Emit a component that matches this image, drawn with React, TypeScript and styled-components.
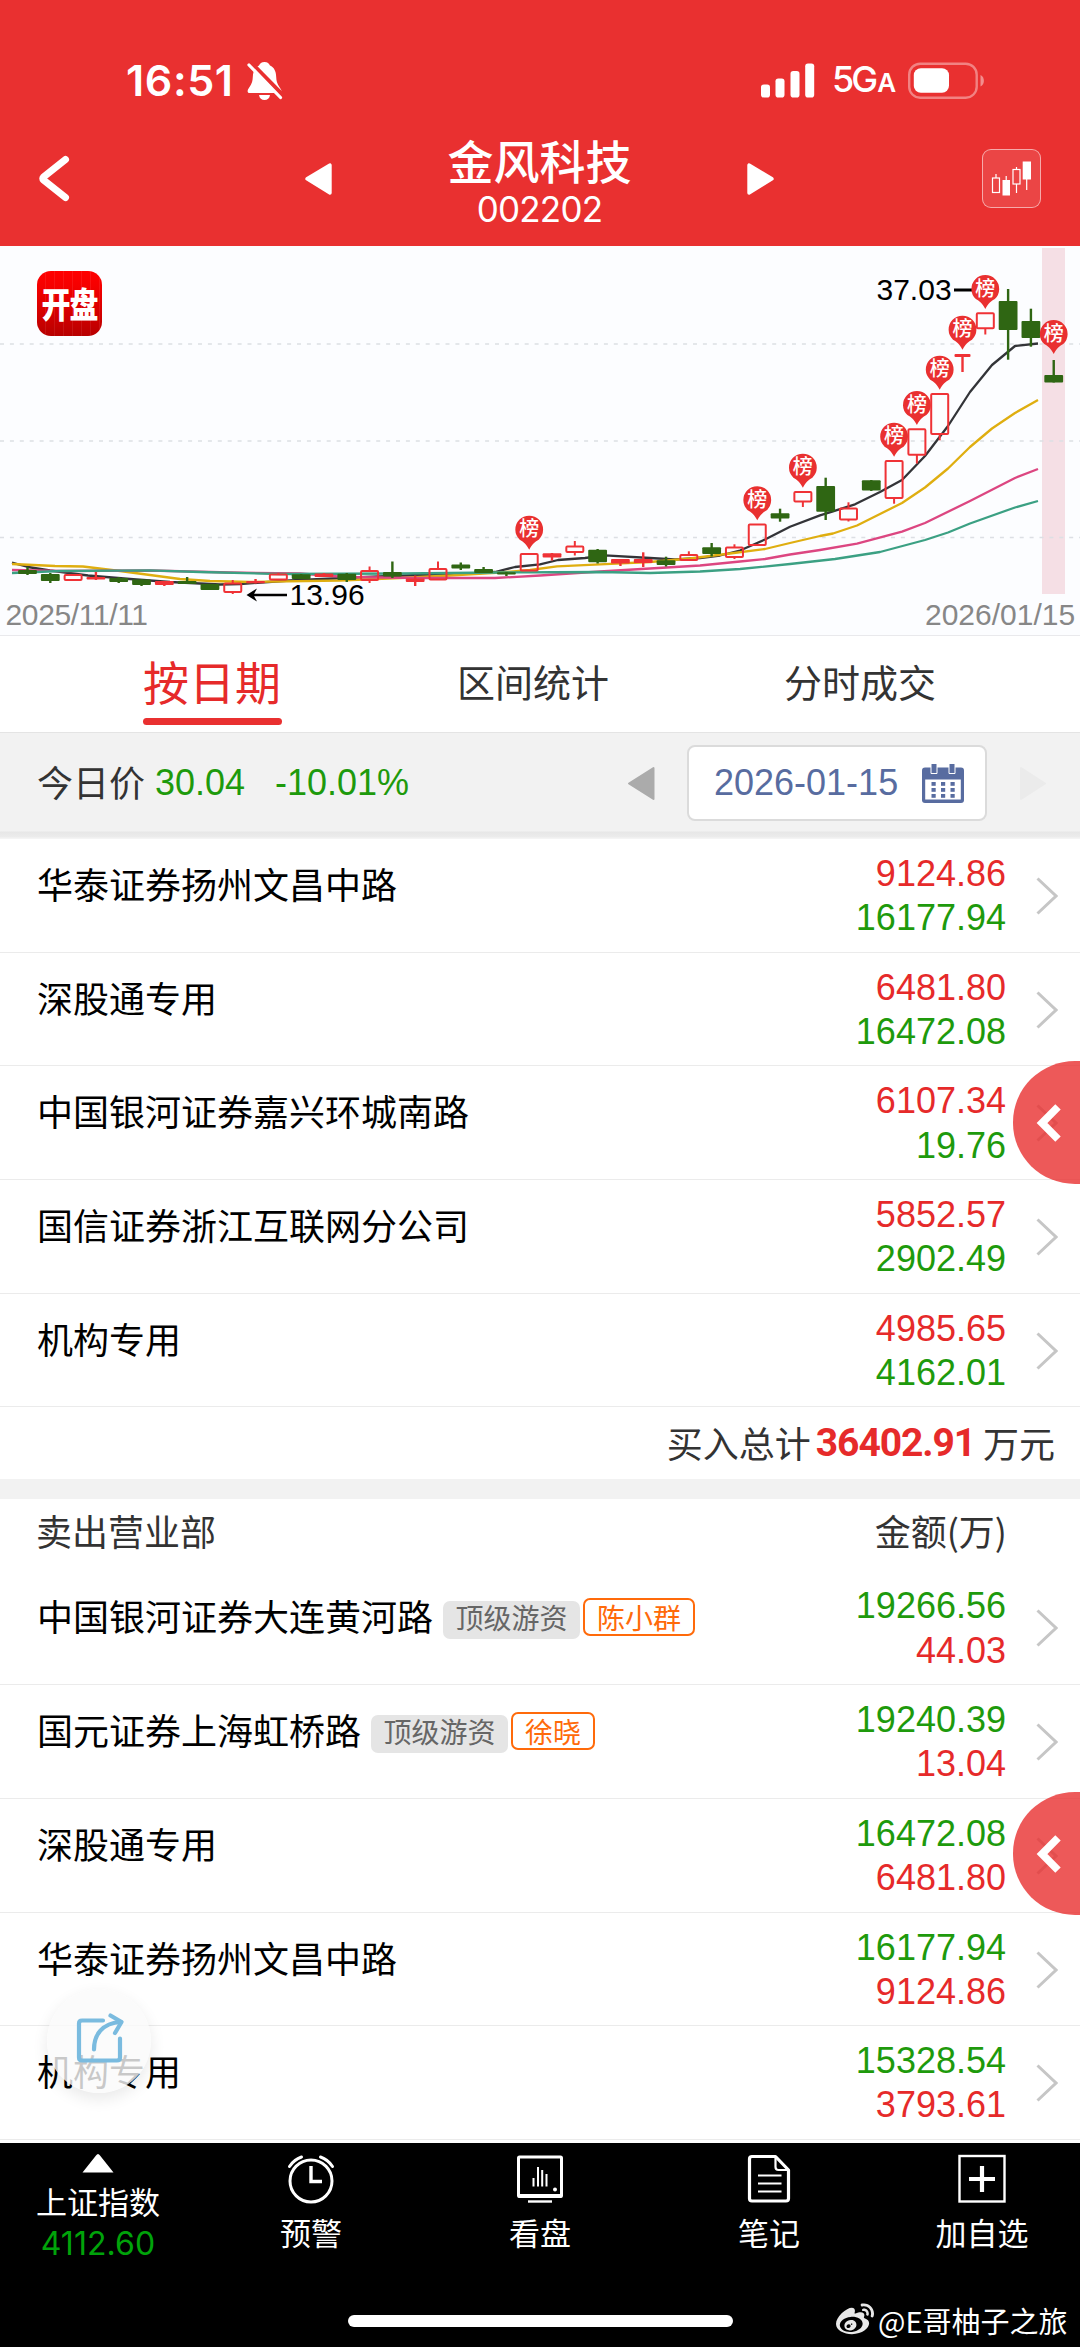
import React from 'react';
import styled, { createGlobalStyle } from 'styled-components';
import { FaWeibo } from 'react-icons/fa';

const GlobalStyle = createGlobalStyle`
  * { box-sizing: border-box; }
  body {
    margin: 0;
    background: #fff;
    font-family: "Liberation Sans", "Noto Sans CJK SC", sans-serif;
  }
`;

const RED = '#e93030';
const UP = '#e62a2a';
const DOWN = '#1e9a0c';

const Page = styled.div`
  position: relative;
  width: 1080px;
  height: 2347px;
  overflow: hidden;
  display: flex;
  flex-direction: column;
  background: #fff;
  color: #000;
`;

const Header = styled.header`
  height: 246px;
  flex: none;
  background: ${RED};
  color: #fff;
  display: flex;
  flex-direction: column;
`;

const StatusBar = styled.div`
  height: 122px;
  padding: 40px 95px 0 126px;
  display: flex;
  justify-content: space-between;
  align-items: center;
  svg { display: block; }
`;

const StatusGroup = styled.div`
  display: flex;
  align-items: center;
`;

const Clock = styled.span`
  font: 600 43px/50px Inter, sans-serif;
  width: 121px;
  letter-spacing: 0.6px;
  margin-top: -2px;
  white-space: nowrap;
`;

const Network = styled.span`
  font: 500 36px/44px Inter, sans-serif;
  width: 76px;
  letter-spacing: -3px;
  margin-left: 17px;
  white-space: nowrap;
  small { font-size: 26px; font-weight: 600; margin-left: 2px; }
`;

const NavBar = styled.div`
  height: 124px;
  display: grid;
  grid-template-columns: 305px 27px 1fr 27px 208px 59px 39px;
  align-items: start;
  svg { display: block; }
`;

const NavSlot = styled.div<{ $top: number; $left?: number }>`
  padding-top: ${p => p.$top}px;
  padding-left: ${p => p.$left ?? 0}px;
`;

const Title = styled.div`
  text-align: center;
  padding-top: 9px;
  h1 {
    margin: 0;
    font: 500 46px/56px "Noto Sans CJK SC", sans-serif;
  }
  p {
    margin: 5px 0 0;
    font: 400 35px/34px Inter, sans-serif;
    letter-spacing: -0.8px;
  }
`;

const ChartButton = styled.div`
  margin-top: 27px;
  width: 59px;
  height: 59px;
  border-radius: 9px;
  border: 1px solid rgba(255, 255, 255, 0.55);
  background: rgba(255, 255, 255, 0.1);
`;

const ChartPanel = styled.section`
  position: relative;
  height: 390px;
  flex: none;
  background: #fcfdff;
  border-bottom: 1px solid #e9e9ec;
  > svg { display: block; }
`;

const AppBadge = styled.div`
  position: absolute;
  left: 37px;
  top: 25px;
  width: 65px;
  height: 65px;
  border-radius: 14px;
  background:
    repeating-linear-gradient(90deg, transparent 0 8px, rgba(255, 255, 255, 0.08) 8px 9px),
    linear-gradient(#ff0000 0%, #f40000 25%, #b80000 100%);
  color: #fff;
  font: 900 29px/62px "Noto Sans CJK SC", sans-serif;
  text-align: center;
  letter-spacing: -1px;
  span {
    display: block;
    transform: scaleY(1.22);
  }
`;

const Tabs = styled.nav`
  height: 97px;
  flex: none;
  display: grid;
  grid-template-columns: 373px 320px 334px;
  border-bottom: 1px solid #e4e4e4;
  justify-items: center;
`;

const Tab = styled.div<{ $active?: boolean }>`
  display: flex;
  flex-direction: column;
  color: ${p => (p.$active ? UP : '#333')};
  font: 400 ${p => (p.$active ? 46 : 38)}px/60px "Noto Sans CJK SC", sans-serif;
  padding: ${p => (p.$active ? '14px 0 0 52px' : '15px 0 0')};
  i {
    height: 7px;
    margin-top: 8px;
    width: 139px;
    border-radius: 4px;
    background: ${RED};
  }
`;

const PriceBar = styled.div`
  height: 106px;
  flex: none;
  background: linear-gradient(#f2f2f2 98px, #e7e7e7 99px, #ececec 104px, #f4f4f4 105px);
  display: flex;
  align-items: flex-start;
  padding: 12px 33px 0 37px;
  font-size: 36px;
  line-height: 76px;
`;

const PriceLabel = styled.span`
  font-family: "Noto Sans CJK SC", sans-serif;
  color: #333;
  line-height: 72px;
  width: 118px;
`;

const Price = styled.span<{ $width: number }>`
  color: ${DOWN};
  width: ${p => p.$width}px;
`;

const Arrow = styled.svg<{ $gap: string }>`
  margin: ${p => p.$gap};
  flex: none;
`;

const DateBox = styled.div`
  width: 300px;
  height: 76px;
  border: 2px solid #dbdbdb;
  border-radius: 8px;
  background: #fff;
  color: #586ca0;
  padding: 0 21px 0 25px;
  display: flex;
  justify-content: space-between;
  align-items: center;
  line-height: 72px;
`;

const List = styled.ul`
  margin: 0;
  padding: 0;
  list-style: none;
  flex: none;
`;

const Row = styled.li`
  height: 113.7px;
  border-bottom: 1px solid #ebebeb;
  padding: 12px 22px 0 37px;
  display: flex;
  align-items: flex-start;
`;

const Name = styled.div`
  flex: 1;
  display: flex;
  font: 400 36px/64px "Noto Sans CJK SC", sans-serif;
`;

const Tag = styled.span<{ $hot?: boolean }>`
  height: 38px;
  margin: ${p => (p.$hot ? '15px 0 0 3px' : '18px 0 0 10px')};
  padding: 0 ${p => (p.$hot ? 12 : 10.5)}px;
  border-radius: 7px;
  border: 2px solid ${p => (p.$hot ? '#ff6a0a' : '#e5e5e5')};
  background: ${p => (p.$hot ? '#fff' : '#e5e5e5')};
  color: ${p => (p.$hot ? '#ff6a0a' : '#666')};
  font-size: 28px;
  line-height: ${p => (p.$hot ? 34 : 29)}px;
`;

const Amounts = styled.div`
  text-align: right;
  font-size: 36px;
  line-height: 44.3px;
  margin: 1px 30px 0 0;
`;

const Amount = styled.div<{ $up: boolean }>`
  color: ${p => (p.$up ? UP : DOWN)};
`;

const Total = styled.div`
  height: 72px;
  flex: none;
  display: flex;
  justify-content: flex-end;
  padding-right: 25px;
  color: #333;
  font: 400 36px/70px "Noto Sans CJK SC", sans-serif;
  b {
    color: ${UP};
    font: 700 39px/73px Roboto, sans-serif;
    letter-spacing: -1.1px;
    margin: 0 8px 0 5px;
  }
`;

const Divider = styled.div`
  height: 20px;
  flex: none;
  background: #f2f2f2;
`;

const ListHeader = styled.div`
  height: 72px;
  flex: none;
  display: flex;
  justify-content: space-between;
  padding: 0 73px 0 36px;
  color: #333;
  font: 400 36px/63px "Noto Sans CJK SC", sans-serif;
`;

const Footer = styled.footer`
  position: absolute;
  left: 0;
  right: 0;
  top: 2143px;
  height: 204px;
  background: #000;
  color: #fff;
  display: grid;
  grid-template-columns: 196px 230px 228px 230px 196px;
  align-items: start;
`;

const FooterItem = styled.div`
  display: flex;
  flex-direction: column;
  align-items: center;
  padding-top: 11px;
  font: 400 31px/40px "Noto Sans CJK SC", sans-serif;
  svg { display: block; margin-bottom: 8px; }
`;

const IndexItem = styled(FooterItem)`
  em {
    font: 400 32px/45px Inter, sans-serif;
    color: #00a30a;
    letter-spacing: 0.1px;
  }
`;

const HomeBar = styled.div`
  position: absolute;
  left: 348px;
  top: 172px;
  width: 385px;
  height: 12px;
  border-radius: 6px;
  background: #fff;
`;

const Watermark = styled.div`
  position: absolute;
  left: 836px;
  top: 155px;
  display: flex;
  align-items: center;
  gap: 4px;
  font: 400 29px/44px "Noto Sans CJK SC", sans-serif;
  color: #fff;
  white-space: nowrap;
  svg { color: #e8e8e8; }
`;

const SideHandle = styled.div<{ $top: number }>`
  position: absolute;
  top: ${p => p.$top}px;
  right: 0;
  width: 67px;
  height: 123px;
  border-radius: 62px 0 0 62px / 61px 0 0 61px;
  background: rgba(233, 48, 48, 0.8);
  display: flex;
  align-items: center;
  padding-left: 23px;
`;

const ShareButton = styled.div`
  position: absolute;
  left: 47px;
  top: 1989px;
  width: 104px;
  height: 104px;
  border-radius: 50%;
  background: rgba(250, 250, 250, 0.8);
  box-shadow: 0 6px 16px rgba(0, 0, 0, 0.09);
  padding: 22px 0 0 28px;
`;

type Kind = 'g' | 'r' | 'h';
// kind (g falling, r thin rising, h hollow rising), body top, body bottom, high, low, listed
type Candle = [Kind, number, number, number, number, boolean?];

const candles: Candle[] = [
  ['g', 570, 574, 567, 575], ['g', 574, 581, 573, 583], ['h', 575, 580, 575, 580],
  ['r', 577, 579.5, 572, 580], ['g', 578, 582, 577, 583], ['g', 579.5, 585, 579, 586],
  ['r', 581, 585, 581, 586], ['g', 581, 584, 577, 584], ['g', 584, 590, 584, 590],
  ['h', 583.5, 592, 580, 594], ['r', 581, 583.3, 579, 583.5], ['h', 574.5, 579.5, 573, 580],
  ['g', 574.3, 579, 574, 579], ['r', 573.5, 577, 573, 577], ['g', 573.7, 580, 573, 582],
  ['h', 571, 580, 566.5, 583], ['g', 572, 576.5, 561.5, 578], ['r', 578.5, 582, 575.5, 586],
  ['h', 569, 579.5, 561.5, 580], ['g', 564.5, 568.5, 562.5, 570], ['g', 569, 573, 567, 573],
  ['g', 572.2, 574.5, 572, 576], ['h', 554, 570.5, 554, 571, true], ['r', 553.2, 557.5, 553, 560.5],
  ['h', 546.5, 552, 541, 555.5], ['g', 549.7, 562.3, 549, 563.5], ['r', 559, 563.5, 559, 566],
  ['r', 559, 563, 552.3, 567], ['g', 560.3, 565, 556.7, 566.5], ['h', 555, 560, 551.3, 560],
  ['g', 547.3, 554, 543, 556.5], ['h', 547.5, 557, 544.3, 559], ['h', 524.5, 545, 524, 546, true],
  ['g', 513.3, 518.5, 508.7, 521.7], ['h', 492, 501.5, 491, 507, true], ['g', 486, 511.7, 477.7, 520],
  ['h', 508.5, 519.5, 502.3, 521.5], ['g', 480.3, 490.5, 480, 491], ['h', 461, 498, 460, 503.7, true],
  ['h', 429.3, 454.7, 429, 463.5, true], ['h', 394, 434, 393.7, 440.3, true], ['r', 354, 357, 354, 372, true],
  ['h', 313.3, 328.3, 313, 334.5, true], ['g', 301, 330, 289, 359.7], ['g', 321, 338, 308.7, 346.7],
  ['g', 375, 382.5, 360, 382.5, true],
];

const averages: Record<string, string> = {
  '#333438': '12,562.7 28,567 50,570.5 88,575.5 130,579 170,582 220,584.5 240,584 290,580.5 365,577 420,575 470,573.5 495,572 515,567 540,564.3 558,560 585,558 605,555.3 650,558 675,559.5 700,558 720,555.5 740,550.5 765,539.5 790,526.7 820,515.3 833,511.3 855,504.3 880,492 902,480 925,456 948,426 970,392 992,365 1015,346 1038,343.5',
  '#dfae10': '12,564 55,566 83,566.5 120,571 150,575 180,579 210,581 250,582 340,580.5 400,578 450,575.5 500,572.5 530,570 557,566.3 600,564.3 650,562 690,558.5 730,553.5 765,549 790,543 820,536 833,533.5 857,525.5 880,514 902,503 925,487.5 948,468.5 970,447 992,428.5 1015,413 1038,400',
  '#dc4681': '12,570 60,571 150,570.5 230,572.5 300,573.5 345,577 420,578 495,578 540,575.5 600,571.5 650,568.5 700,565.5 740,561.5 765,559 790,554.5 820,550 857,543.7 902,531.7 925,523 970,501 1015,478 1038,469',
  '#3ba083': '12,573 60,571 150,570.3 200,572 280,574 400,573.5 500,572.5 600,572 650,573 700,571.5 740,569 790,564 835,559 880,552 925,540 948,532.5 970,523.5 1015,507.5 1038,501',
};

const candleX = (i: number) => 27.5 + i * 22.805;

const KLine = () => (
  <svg width="1080" height="389" viewBox="0 246 1080 389">
    <rect x="1042" y="248" width="23" height="346" fill="#f5dfe5" />
    {[344, 441, 537.5].map(y => (
      <line key={y} x1="0" x2="1080" y1={y} y2={y} stroke="#dcdfe4" strokeWidth="1.4" strokeDasharray="4 5.9" />
    ))}
    {Object.entries(averages).map(([color, points]) => (
      <polyline key={color} points={points} fill="none" stroke={color} strokeWidth="2.3" strokeLinejoin="round" />
    ))}
    {candles.map(([kind, top, bottom, high, low], i) => {
      const x = candleX(i);
      const color = kind === 'g' ? '#2f6613' : '#ef3236';
      if (kind === 'h') {
        return (
          <g key={i} stroke={color} strokeWidth="2">
            {high < top - 1 && <line x1={x} x2={x} y1={high} y2={top} />}
            {low > bottom + 1 && <line x1={x} x2={x} y1={bottom} y2={low} />}
            <rect x={x - 8.5} y={top} width="17" height={bottom - top} rx="1" fill="none" />
          </g>
        );
      }
      return (
        <g key={i} fill={color}>
          <rect x={x - 1.2} y={high} width="2.4" height={low - high} />
          <rect x={x - (i === 41 ? 8 : 9.4)} y={top} width={i === 41 ? 16 : 18.8} height={bottom - top} rx="1" />
        </g>
      );
    })}
    <path d="M954 290H972" stroke="#000" strokeWidth="3" />
    {candles.map(([, top, , high, , listed], i) => {
      if (!listed) return null;
      const x = candleX(i);
      const tip = (i === 45 ? high - 6 : top - 4.3);
      return (
        <g key={i} transform={`translate(${x} ${tip})`}>
          <path d="M0 0C-3 -6 -6 -8 -9.5 -10A13.9 13.9 0 1 1 9.5 -10C6 -8 3 -6 0 0Z" fill={RED} />
          <text x="0" y="-13.3" textAnchor="middle" fill="#fff" fontSize="20" fontWeight="500" fontFamily="Noto Sans CJK SC">榜</text>
        </g>
      );
    })}
    <g fontFamily="Liberation Sans, sans-serif" fontSize="30">
      <text x="876.5" y="300">37.03</text>
      <text x="289.5" y="605.3">13.96</text>
      <g fill="#878787">
        <text x="5.5" y="624.5" letterSpacing="-0.35">2025/11/11</text>
        <text x="925" y="624.5">2026/01/15</text>
      </g>
    </g>
    <path d="M287 595H250" stroke="#000" strokeWidth="2.6" />
    <path d="M246.500 595L257 588.500L253.500 595L257 601.500Z" fill="#000" />
  </svg>
);

type Entry = { name: string; top: string; bottom: string; player?: string };

const buyers: Entry[] = [
  { name: '华泰证券扬州文昌中路', top: '9124.86', bottom: '16177.94' },
  { name: '深股通专用', top: '6481.80', bottom: '16472.08' },
  { name: '中国银河证券嘉兴环城南路', top: '6107.34', bottom: '19.76' },
  { name: '国信证券浙江互联网分公司', top: '5852.57', bottom: '2902.49' },
  { name: '机构专用', top: '4985.65', bottom: '4162.01' },
];

const sellers: Entry[] = [
  { name: '中国银河证券大连黄河路', top: '19266.56', bottom: '44.03', player: '陈小群' },
  { name: '国元证券上海虹桥路', top: '19240.39', bottom: '13.04', player: '徐晓' },
  { name: '深股通专用', top: '16472.08', bottom: '6481.80' },
  { name: '华泰证券扬州文昌中路', top: '16177.94', bottom: '9124.86' },
  { name: '机构专用', top: '15328.54', bottom: '3793.61' },
];

const Entries = ({ items, buying }: { items: Entry[]; buying: boolean }) => (
  <List>
    {items.map(item => (
      <Row key={item.name}>
        <Name>
          {item.name}
          {item.player && <Tag>顶级游资</Tag>}
          {item.player && <Tag $hot>{item.player}</Tag>}
        </Name>
        <Amounts>
          <Amount $up={buying}>{item.top}</Amount>
          <Amount $up={!buying}>{item.bottom}</Amount>
        </Amounts>
        <Arrow $gap="26px 0 0" width="22" height="38" viewBox="0 0 22 38">
          <path d="M1.500 1.500L20 19L1.500 36.500" fill="none" stroke="#c6c6c6" strokeWidth="3" />
        </Arrow>
      </Row>
    ))}
  </List>
);

const Handle = ({ top }: { top: number }) => (
  <SideHandle $top={top}>
    <svg width="27" height="40" viewBox="0 0 27 40">
      <path d="M22 3.800L6 20L22 36.200" fill="none" stroke="#fff" strokeWidth="7.600" />
    </svg>
  </SideHandle>
);

export default function App() {
  return (
    <Page>
      <GlobalStyle />
      <Header>
        <StatusBar>
          <StatusGroup>
            <Clock>16:51</Clock>
            <svg width="36" height="40" viewBox="0 0 36 40">
              <g fill="#fff">
                <path d="M17.500 1C14.500 1 12.800 2.600 12 4.600C7.500 7 6 11 5.800 16C5.500 23 3 25 1 28.500C0 31 1 32 3 32H32C34.500 32 35 30.500 34 28.500C32 25 29.500 23 29.200 16C29 10 27 6.500 23 4.600C22.200 2.600 20.500 1 17.500 1Z" />
                <path d="M12 34H23C22.500 37.200 20.500 39 17.500 39S12.500 37.200 12 34Z" />
              </g>
              <path d="M3.500 1.500L36 34.500" stroke={RED} strokeWidth="4.500" />
              <path d="M2 4L33.500 36.500" stroke="#fff" strokeWidth="3.200" strokeLinecap="round" />
            </svg>
          </StatusGroup>
          <StatusGroup>
            <svg width="54" height="36" viewBox="0 0 54 36" fill="#fff">
              <rect x="0" y="21.500" width="9" height="13" rx="2.800" />
              <rect x="14.500" y="15.500" width="9" height="19" rx="2.800" />
              <rect x="29.500" y="8" width="9" height="26.500" rx="2.800" />
              <rect x="44.200" y="0.500" width="9" height="34" rx="2.800" />
            </svg>
            <Network>5G<small>A</small></Network>
            <svg width="77" height="38" viewBox="0 0 77 38">
              <rect x="1.200" y="1.700" width="67.500" height="34" rx="11" fill="none" stroke="#fff" strokeOpacity="0.4" strokeWidth="2.400" />
              <rect x="5.800" y="6.200" width="35.200" height="24.500" rx="7" fill="#fff" />
              <path d="M72.500 13V24.500C77 22.500 77 15 72.500 13Z" fill="#fff" fillOpacity="0.45" />
            </svg>
          </StatusGroup>
        </StatusBar>
        <NavBar>
          <NavSlot $top={33} $left={38}>
            <svg width="32" height="48" viewBox="0 0 32 48">
              <path d="M27.500 4.500L5.500 22Q4 23.500 5.500 25L27.500 42.500" fill="none" stroke="#fff" strokeWidth="7" strokeLinecap="round" strokeLinejoin="round" />
            </svg>
          </NavSlot>
          <NavSlot $top={41}>
            <svg width="27" height="32" viewBox="0 0 27 32">
              <path d="M2 15.800L25 2V30Z" fill="#fff" stroke="#fff" strokeWidth="3.400" strokeLinejoin="round" />
            </svg>
          </NavSlot>
          <Title>
            <h1>金风科技</h1>
            <p>002202</p>
          </Title>
          <NavSlot $top={41}>
            <svg width="27" height="32" viewBox="0 0 27 32">
              <path d="M25 15.800L2 2V30Z" fill="#fff" stroke="#fff" strokeWidth="3.400" strokeLinejoin="round" />
            </svg>
          </NavSlot>
          <span />
          <ChartButton>
            <svg width="57" height="57" viewBox="983 150 57 57">
              <g fill="none" stroke="#fff" strokeWidth="1.200">
                <rect x="992.500" y="178" width="7" height="14.500" />
                <path d="M996 174V178M1006.200 176V180M1016.500 167V169.500M1016.500 184V193M1026.700 179V190" />
                <rect x="1013" y="169.500" width="7" height="14.500" />
              </g>
              <path d="M1002.500 180H1010V195.500H1002.500ZM1022.700 161.500H1031V179.500H1022.700Z" fill="#fff" />
            </svg>
          </ChartButton>
        </NavBar>
      </Header>

      <ChartPanel>
        <KLine />
        <AppBadge><span>开盘</span></AppBadge>
      </ChartPanel>

      <Tabs>
        <Tab $active>按日期<i /></Tab>
        <Tab>区间统计</Tab>
        <Tab>分时成交</Tab>
      </Tabs>

      <PriceBar>
        <PriceLabel>今日价</PriceLabel>
        <Price $width={120}>30.04</Price>
        <Price $width={140}>-10.01%</Price>
        <Arrow $gap="21px 32px 0 auto" width="28" height="35" viewBox="0 0 28 35">
          <path d="M2 17.500L26.500 2V33Z" fill="#ababab" stroke="#ababab" strokeWidth="2" strokeLinejoin="round" />
        </Arrow>
        <DateBox>
          2026-01-15
          <svg width="42" height="40" viewBox="0 0 42 40">
            <path d="M3 4.500H39Q42 4.500 42 7.500V37Q42 40 39 40H3Q0 40 0 37V7.500Q0 4.500 3 4.500Z" fill="#586ca0" />
            <rect x="3.200" y="16.500" width="35.600" height="20" fill="#fff" />
            <path d="M9 0.500H15V10.500H9ZM27 0.500H33V10.500H27Z" fill="#586ca0" stroke="#fff" strokeWidth="1" />
            <g fill="#586ca0">
              {[19, 25, 31].map(y => [9.500, 19, 28.500].map(x => (
                <rect key={`${x}-${y}`} x={x} y={y} width="4.200" height="3.800" />
              )))}
            </g>
          </svg>
        </DateBox>
        <Arrow $gap="21px 0 0 32px" width="28" height="35" viewBox="0 0 28 35">
          <path d="M26 17.500L2 2V33Z" fill="#ebebeb" stroke="#ebebeb" strokeWidth="2" strokeLinejoin="round" />
        </Arrow>
      </PriceBar>

      <Entries items={buyers} buying />
      <Total>买入总计<b>36402.91</b>万元</Total>
      <Divider />
      <ListHeader><span>卖出营业部</span><span>金额(万)</span></ListHeader>
      <Entries items={sellers} buying={false} />

      <Handle top={1061} />
      <Handle top={1792} />

      <ShareButton>
        <svg width="50" height="54" viewBox="0 0 50 54" fill="none" stroke="#7abbdf" strokeWidth="4.200" strokeLinecap="round" strokeLinejoin="round">
          <path d="M28 9.500H7Q4 9.500 4 12.500V46.500Q4 49.500 7 49.500H42Q45 49.500 45 46.500V27.500" />
          <path d="M19 38.500C19 24 27 12 46 11" />
          <path d="M35.500 4.500L46.500 11L40 22" />
        </svg>
      </ShareButton>

      <Footer>
        <IndexItem>
          <svg width="32" height="19" viewBox="0 0 32 19"><path d="M16 0Q17 0 18 1.500L31.500 18.500H0.500L14 1.500Q15 0 16 0Z" fill="#fff" /></svg>
          上证指数
          <em>4112.60</em>
        </IndexItem>
        <FooterItem>
          <svg width="48" height="50" viewBox="0 0 48 50" fill="none" stroke="#fff" strokeWidth="3" strokeLinecap="round">
            <circle cx="24" cy="27" r="21" />
            <path d="M2.500 12.500Q7 5.500 14.500 3M45.500 12.500Q41 5.500 33.500 3" />
            <path d="M24 12V27.500H35" strokeWidth="3.400" strokeLinecap="butt" />
          </svg>
          预警
        </FooterItem>
        <FooterItem>
          <svg width="48" height="50" viewBox="0 0 48 50" fill="none" stroke="#fff" strokeWidth="3">
            <rect x="2.500" y="3" width="43" height="39.500" rx="1" />
            <path d="M2.500 42H45.500" strokeWidth="4" />
            <path d="M12 47.500H36" strokeWidth="2.400" />
            <path d="M17.500 24V32.500M22 13V32.500M26.200 16V32.500M30.500 20V32.500" strokeWidth="2" />
            <circle cx="39" cy="35.500" r="2" fill="#fff" stroke="none" />
          </svg>
          看盘
        </FooterItem>
        <FooterItem>
          <svg width="44" height="50" viewBox="0 0 44 50" fill="none" stroke="#fff" strokeWidth="3.200" strokeLinejoin="round">
            <path d="M4.500 2.500H28.500L41.500 16V44.500Q41.500 47 39 47H5Q2.500 47 2.500 44.500V5Q2.500 2.500 5 2.500Z" />
            <path d="M28.500 3V13Q28.500 16 31.500 16H41" strokeWidth="2.200" />
            <path d="M11 21.500H34.500M11 29.500H34.500M11 37.500H34.500" strokeWidth="2.200" />
          </svg>
          笔记
        </FooterItem>
        <FooterItem>
          <svg width="48" height="50" viewBox="0 0 48 50" fill="none" stroke="#fff">
            <rect x="1.500" y="2" width="45" height="45.500" strokeWidth="2.400" />
            <path d="M24 12V38M11 25H37" strokeWidth="4.200" />
          </svg>
          加自选
        </FooterItem>
        <HomeBar />
        <Watermark><FaWeibo size={38} />@E哥柚子之旅</Watermark>
      </Footer>
    </Page>
  );
}
